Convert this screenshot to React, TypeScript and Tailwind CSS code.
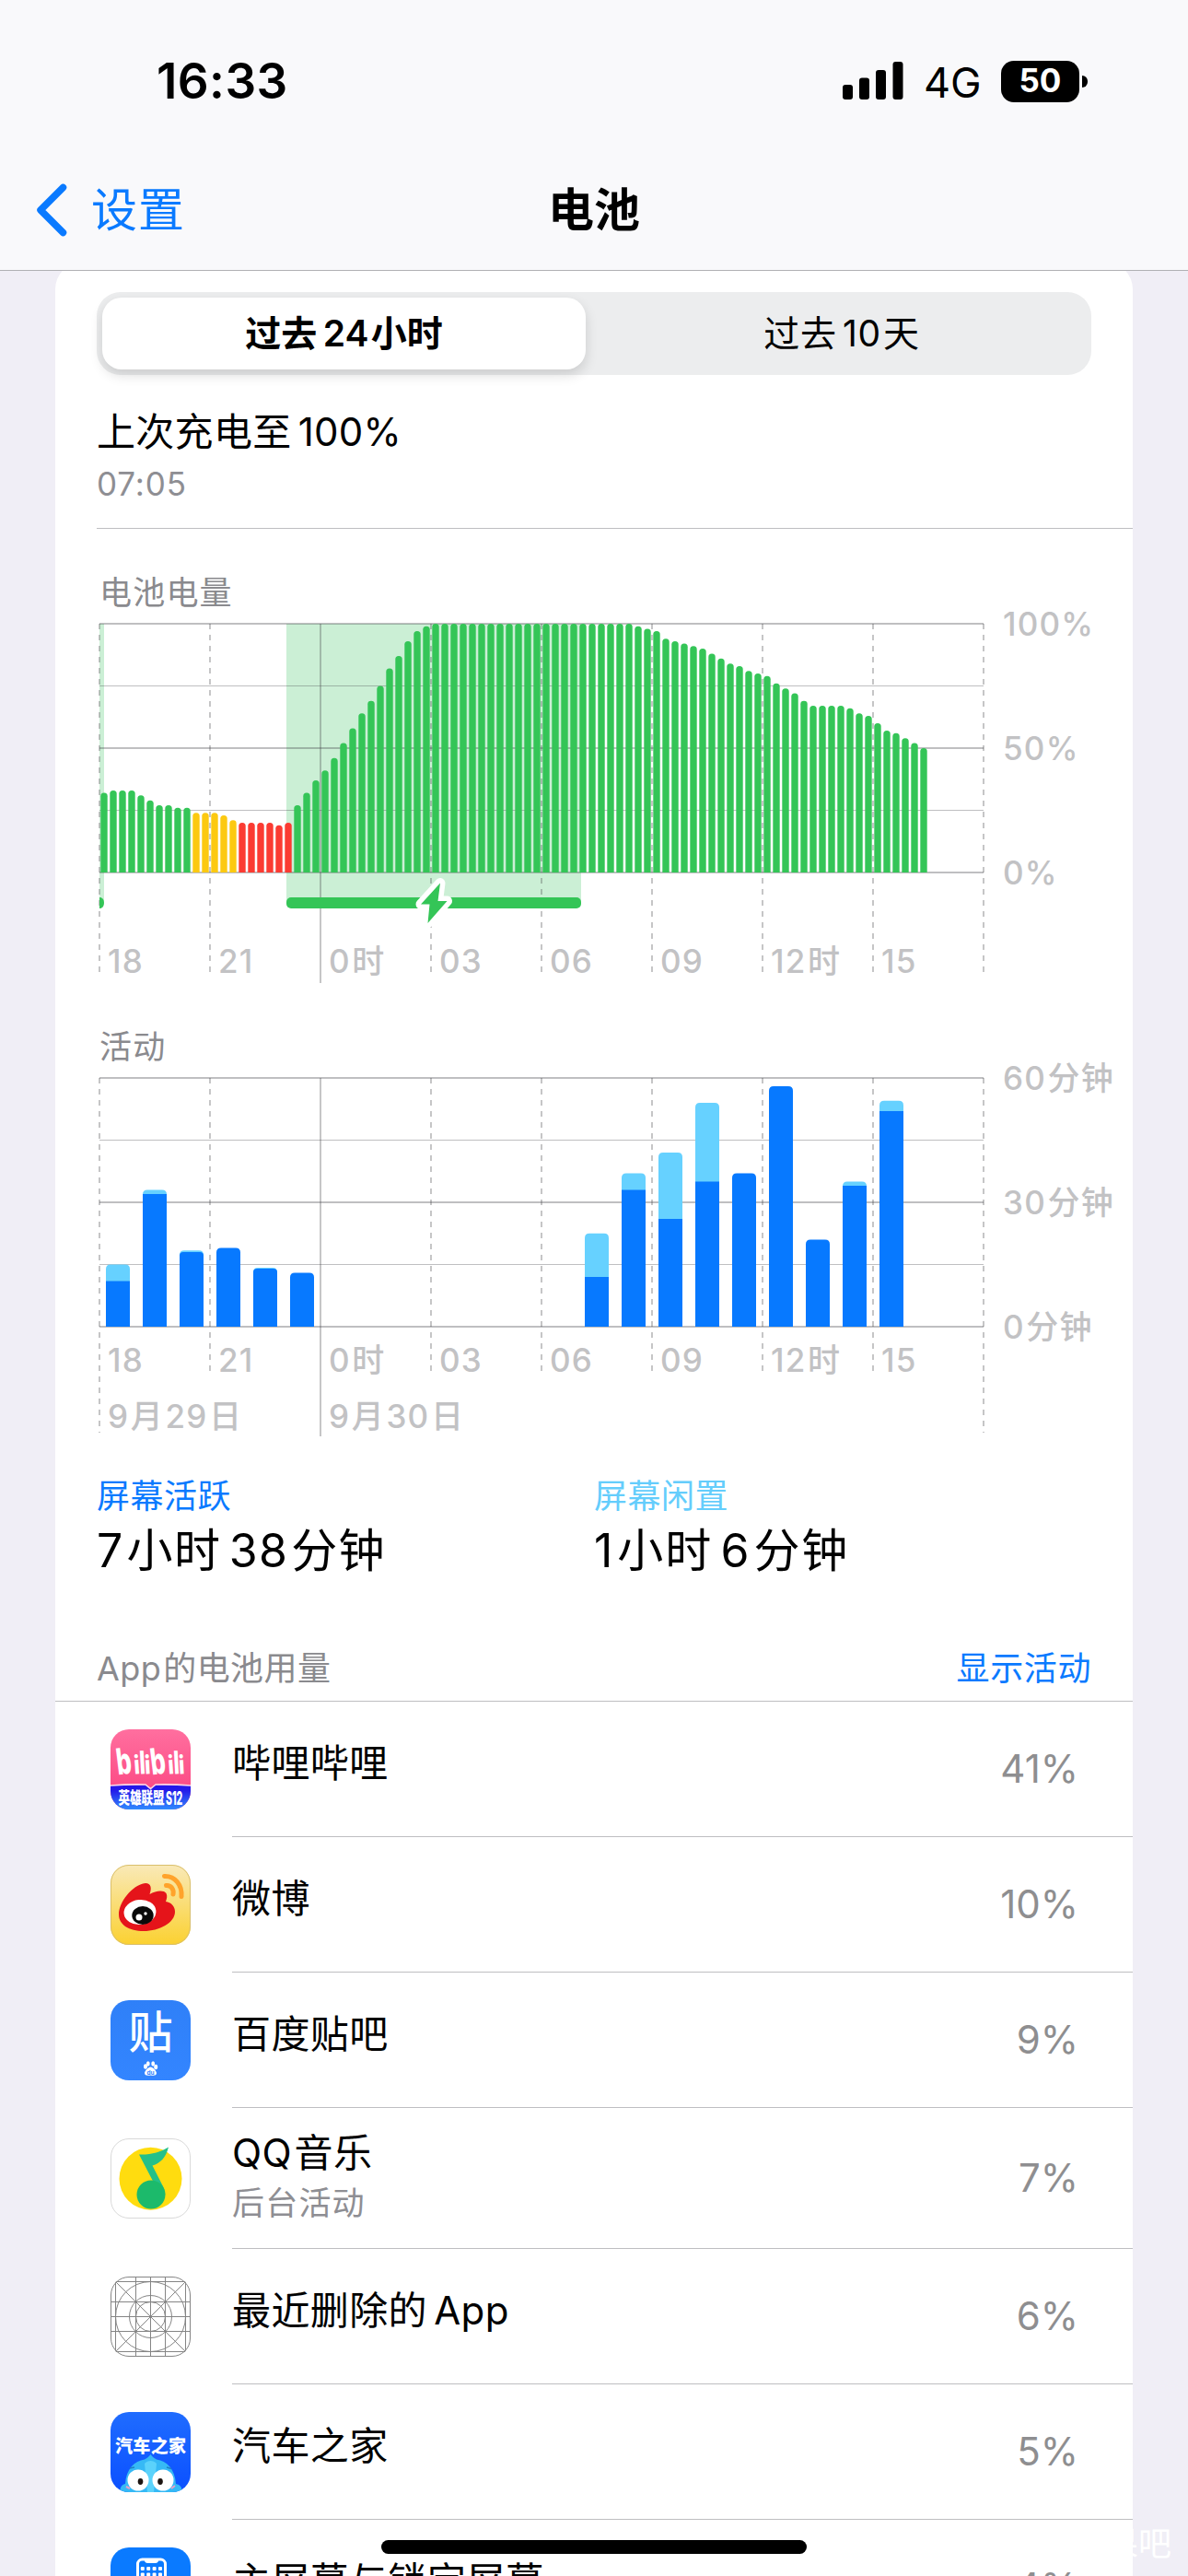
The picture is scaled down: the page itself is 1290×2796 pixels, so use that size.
import React from 'react';

const LEVELS = [
  32, 33, 33, 33, 31, 29, 27, 27, 26, 26, 24, 24, 24, 23, 21, 20, 20, 20, 20, 19, 20, 27, 32, 37, 41, 46, 52, 58, 64,
  69, 75, 82, 87, 93, 97, 99, 100, 100, 100, 100, 100, 100, 100, 100, 100, 100, 100, 100, 100, 100, 100, 100, 100, 100,
  100, 100, 100, 100, 99, 98, 97, 94, 93, 92, 91, 90, 88, 86, 84, 83, 81, 80, 79, 76, 74, 72, 69, 67, 67, 67, 67, 66,
  64, 63, 60, 57, 56, 54, 52, 50,
];

// [hour slot, screen on minutes, total minutes]
const ACTIVITY: [number, number, number][] = [
  [0, 11, 15],
  [1, 32, 33],
  [2, 18, 18.4],
  [3, 19, 19],
  [4, 14, 14.2],
  [5, 13, 13],
  [13, 12, 22.5],
  [14, 33, 37],
  [15, 26, 42],
  [16, 35, 54],
  [17, 37, 37],
  [18, 58, 58],
  [19, 21, 21],
  [20, 34, 35],
  [21, 52, 54.5],
];

const HOURS = ['18', '21', '0时', '03', '06', '09', '12时', '15'];

const LEFT = 48;
const STEP = 120;
const PLOT_W = 960;
const PLOT_H = 270;

const splitLatin = (text: string) => text.split(/([\x21-\x7e]+)/).filter(Boolean);
const isLatin = (part: string) => /^[\x21-\x7e]/.test(part);

// adds the small gap between latin and chinese runs
const Mixed: React.FC<{ text: string }> = ({ text }) => (
  <>
    {splitLatin(text).map((part, i) => (
      <span key={i} className={i === 0 ? '' : isLatin(part) ? 'ml-[0.17em]' : 'ml-[0.06em]'}>
        {part}
      </span>
    ))}
  </>
);

interface LabelProps {
  x: number;
  y: number;
  text: string;
  className?: string;
}

const Label: React.FC<LabelProps> = ({ x, y, text, className = 'fill-[#c2c2c4] text-[35px] font-medium' }) => (
  <text x={x} y={y + 12.8} className={className} letterSpacing="1.2">
    {splitLatin(text).map((part, i) => (
      <tspan key={i} dx={i > 0 ? 1.5 : 0}>
        {part}
      </tspan>
    ))}
  </text>
);

interface GridProps {
  top: number;
  ends: number[];
  dash: string;
}

const Grid: React.FC<GridProps> = ({ top, ends, dash }) => (
  <g stroke="#3c3c43" strokeOpacity="0.33">
    {[0, 1, 2, 3, 4].map((i) => (
      <line
        key={i}
        x1={LEFT}
        x2={LEFT + PLOT_W}
        y1={top + i * 67.5}
        y2={top + i * 67.5}
        strokeWidth={i % 2 ? 1.2 : 1.8}
      />
    ))}
    {ends.map((end, i) => (
      <line
        key={i}
        x1={LEFT + i * STEP}
        x2={LEFT + i * STEP}
        y1={top}
        y2={end}
        strokeWidth="1.8"
        strokeDasharray={i === 2 ? undefined : dash}
      />
    ))}
  </g>
);

const barTop = (x: number, y: number, w: number, bottom: number, r: number) =>
  `M${x} ${bottom}V${y + r}Q${x} ${y} ${x + r} ${y}H${x + w - r}Q${x + w} ${y} ${x + w} ${y + r}V${bottom}Z`;

const levelColor = (i: number) => {
  if (i >= 10 && i < 15) return '#fcc911';
  if (i >= 15 && i < 21) return '#fb3b32';
  return '#34c557';
};

const LevelChart: React.FC = () => {
  const top = 103;
  const bottom = top + PLOT_H;
  return (
    <svg width="1170" height="516" viewBox="0 0 1170 516" className="block">
      <Label x={48} y={69} text="电池电量" className="fill-[#8a8a8e] text-[35px]" />
      <rect x="48" y={top} width="5" height="303" fill="#cbefd5" />
      <rect x="251" y={top} width="320" height="303" fill="#cbefd5" />
      <Grid top={top} ends={[487, 487, 493, 487, 487, 487, 487, 487, 487]} dash="6 6" />
      {LEVELS.map((v, i) => (
        <path
          key={i}
          d={barTop(LEFT + i * 10 + 1.3, bottom - v * 2.7, 7.4, bottom, 3.6)}
          fill={levelColor(i)}
        />
      ))}
      <path d="M48 400H49Q53 401 53 406Q53 411 49 412H48Z" fill="#34c557" />
      <rect x="251" y="400" width="320" height="12" rx="5" fill="#34c557" />
      <path
        d="M418 384.5L397 407.5H406.500L404.500 428L425.500 404H415.500Z"
        fill="#34c557"
        stroke="#fff"
        strokeWidth="11"
        strokeLinejoin="round"
        paintOrder="stroke"
      />
      {HOURS.map((h, i) => (
        <Label key={h} x={LEFT + i * STEP + 9} y={469.5} text={h} />
      ))}
      {['100%', '50%', '0%'].map((t, i) => (
        <Label key={t} x={1029} y={top + i * 135 + 0.5} text={t} />
      ))}
    </svg>
  );
};

const ActivityChart: React.FC = () => {
  const top = 80;
  const bottom = top + PLOT_H;
  return (
    <svg width="1170" height="500" viewBox="0 0 1170 500" className="block">
      <Label x={48} y={46.5} text="活动" className="fill-[#8a8a8e] text-[35px]" />
      <Grid top={top} ends={[465, 404, 469, 404, 404, 404, 404, 404, 465]} dash="6 6" />
      {ACTIVITY.map(([slot, on, total]) => {
        const x = LEFT + slot * 40 + 7;
        const onTop = bottom - on * 4.5;
        return (
          <g key={slot}>
            <path d={barTop(x, bottom - total * 4.5, 26, bottom, 5)} fill={total > on ? '#66d1ff' : '#0779ff'} />
            {total > on && (
              <path d={barTop(x, onTop, 26, bottom, total - on < 0.5 ? 4 : 0)} fill="#0779ff" />
            )}
          </g>
        );
      })}
      {HOURS.map((h, i) => (
        <Label key={h} x={LEFT + i * STEP + 9} y={386} text={h} />
      ))}
      <Label x={57} y={447} text="9月29日" />
      <Label x={297} y={447} text="9月30日" />
      {['60分钟', '30分钟', '0分钟'].map((t, i) => (
        <Label key={t} x={1029} y={top + i * 135 + 0.5} text={t} />
      ))}
    </svg>
  );
};

const IconFrame: React.FC<{ id: string; from: string; to: string; border?: string; children: React.ReactNode }> = ({
  id,
  from,
  to,
  border,
  children,
}) => (
  <svg width="87" height="87" viewBox="0 0 87 87" className="block">
    <defs>
      <clipPath id={`${id}-clip`}>
        <rect width="87" height="87" rx="20" />
      </clipPath>
      <linearGradient id={`${id}-bg`} x1="0" y1="0" x2="0" y2="1">
        <stop offset="0" stopColor={from} />
        <stop offset="1" stopColor={to} />
      </linearGradient>
    </defs>
    <g clipPath={`url(#${id}-clip)`}>
      <rect width="87" height="87" fill={`url(#${id}-bg)`} />
      {children}
    </g>
    {border && <rect x="0.5" y="0.5" width="86" height="86" rx="19.5" fill="none" stroke={border} />}
  </svg>
);

const BilibiliIcon = () => (
  <IconFrame id="bili" from="#ff6f9f" to="#fb3f7c">
    <g className="fill-white text-[30px] font-extrabold">
      {[8, 45].map((x) => (
        <g key={x} transform={`translate(${x} 49.500)`}>
          <text transform="rotate(-7) scale(0.85 1.320)">b</text>
          <text transform="translate(18 -1) rotate(-4) scale(0.75 0.920)">i</text>
          <text transform="translate(24 -1) rotate(-3) scale(0.75 1.150)">l</text>
          <text transform="translate(29.500 -1) rotate(-3) scale(0.75 0.920)">i</text>
        </g>
      ))}
    </g>
    <defs>
      <linearGradient id="bili-foot" x1="0" y1="0" x2="0" y2="1">
        <stop offset="0.2" stopColor="#2418e8" />
        <stop offset="1" stopColor="#2f8bff" />
      </linearGradient>
    </defs>
    <path d="M0 61Q20 60 38 60.5L43.5 65L49 60.5Q67 60 87 61V87H0Z" fill="url(#bili-foot)" />
    <path d="M0 61Q20 59.5 38 60L43.5 64.5L49 60Q67 59.5 87 61" fill="none" stroke="#ffd9e8" strokeWidth="1.6" />
    <text transform="translate(8.500 81) scale(0.76 1.080)" className="fill-white text-[16.5px] font-black">
      英雄联盟
    </text>
    <text transform="translate(60 82) scale(0.620 1.200)" className="fill-white text-[17px] font-extrabold">
      S12
    </text>
  </IconFrame>
);

const WeiboIcon = () => (
  <IconFrame id="weibo" from="#f9e9b8" to="#fbd130" border="#d9bf6c">
    <path
      d="M9 54C9 41 23 22 38 20C44 20 45 25 42.500 32C49 28 58 27 60.500 31C62 34 61 37 60 40C66 41 70 45 70 51C70 63 53 72 36 72C20 72 9 65 9 54Z"
      fill="#e5141a"
    />
    <ellipse cx="32" cy="51.500" rx="17.500" ry="13.500" fill="#fff" transform="rotate(-6 32 51.5)" />
    <ellipse cx="35" cy="55" rx="11.700" ry="10" fill="#0a0a0a" />
    <circle cx="31" cy="57" r="3.500" fill="#fff" />
    <circle cx="38" cy="53" r="1.700" fill="#fff" />
    <path
      d="M58.500 12.500C70 12 78 22 77 34.500M60.500 22.500C66 22 69 27 68 32"
      fill="none"
      stroke="#ffa32b"
      strokeWidth="5"
      strokeLinecap="round"
    />
  </IconFrame>
);

const TiebaIcon = () => (
  <IconFrame id="tieba" from="#2f80f8" to="#3385ff">
    <text x="19.500" y="51.500" className="fill-white text-[48px] font-medium">
      贴
    </text>
    <g fill="#fff">
      <ellipse cx="38" cy="72" rx="2" ry="2.800" />
      <ellipse cx="40.800" cy="69" rx="1.900" ry="2.700" />
      <ellipse cx="46.200" cy="69" rx="1.900" ry="2.700" />
      <ellipse cx="49.200" cy="72.500" rx="2" ry="2.800" />
      <path d="M43.500 72.500C46 72.500 50 77 50 79C50 82 47 82 43.500 81.500C40 82 37 82 37 79C37 77 41 72.500 43.500 72.500Z" />
    </g>
    <text x="39.500" y="80.500" className="fill-[#3385ff] text-[6.5px] font-bold">
      du
    </text>
  </IconFrame>
);

const MusicIcon = () => (
  <IconFrame id="music" from="#ffffff" to="#ffffff" border="#d9d9d9">
    <circle cx="43.500" cy="43.700" r="34" fill="#ffdc0f" />
    <path
      d="M31 17.500C44 18 54 15 63 9.500C60 21 54 27 45.500 29.500L57.500 53C59 57 59.500 60 59 63L50 54L31 17.500Z"
      fill="#25c089"
    />
    <circle cx="44" cy="61" r="15.500" fill="#1cba6b" />
  </IconFrame>
);

const GridIcon = () => (
  <IconFrame id="grid" from="#ffffff" to="#ffffff" border="#858585">
    <g fill="none" stroke="#858585">
      {[5.5, 27.5, 43.5, 59.5, 81.5].map((p) => (
        <path key={p} d={`M${p} 0V87M0 ${p}H87`} />
      ))}
      <path d="M5.500 5.500L81.500 81.500M81.500 5.500L5.500 81.500" />
      <circle cx="43.500" cy="43.500" r="38" />
      <circle cx="43.500" cy="43.500" r="23" />
      <circle cx="43.500" cy="43.500" r="16" />
    </g>
  </IconFrame>
);

const AutohomeIcon = () => (
  <IconFrame id="auto" from="#1f6cff" to="#0b50ff">
    <text x="5" y="43.500" className="fill-white text-[19px] font-black" textLength="77">
      汽车之家
    </text>
    <path
      d="M10 87C11 79 13 79 16 78C17 62 26 53 37 51.500C40 50 42 48 43.500 46C45 48 47 50 50 51.500C61 53 70 62 71 78C75 79 77 80 78 87Z"
      fill="#36b9f5"
    />
    <path d="M37 56C40 52 47 52 50 56L47 87H40Z" fill="#5bd2fb" />
    <circle cx="30" cy="74" r="11.500" fill="#fff" />
    <circle cx="57" cy="74" r="11.500" fill="#fff" />
    <ellipse cx="32.500" cy="75.500" rx="2.800" ry="3.400" fill="#1c1512" />
    <ellipse cx="54" cy="75.500" rx="2.800" ry="3.400" fill="#1c1512" />
    <path d="M21 61L26 60M61 60L66 61.500" stroke="#1d7fc4" strokeWidth="1.500" />
    <path d="M17 81L21 83M66 83L70 80" stroke="#e9a0c8" strokeWidth="2" />
  </IconFrame>
);

const HomeScreenIcon = () => (
  <IconFrame id="home" from="#0a7aff" to="#0a7aff">
    <rect x="29.500" y="13" width="30" height="60" rx="5" fill="none" stroke="#fff" strokeWidth="3" />
    <path d="M37 13H52V15Q51 17 49 17H40Q38 17 37 15Z" fill="#fff" />
    {[23, 29.5, 36].map((y) =>
      [34.8, 41.2, 47.6, 54].map((x) => (
        <rect key={`${x}-${y}`} x={x - 2} y={y - 2} width="4" height="4" rx="1" fill="#fff" />
      )),
    )}
  </IconFrame>
);

interface AppUsage {
  name: string;
  note?: string;
  percent: string;
  icon: React.ReactNode;
}

const APPS: AppUsage[] = [
  { name: '哔哩哔哩', percent: '41%', icon: <BilibiliIcon /> },
  { name: '微博', percent: '10%', icon: <WeiboIcon /> },
  { name: '百度贴吧', percent: '9%', icon: <TiebaIcon /> },
  { name: 'QQ音乐', note: '后台活动', percent: '7%', icon: <MusicIcon /> },
  { name: '最近删除的App', percent: '6%', icon: <GridIcon /> },
  { name: '汽车之家', percent: '5%', icon: <AutohomeIcon /> },
  { name: '主屏幕与锁定屏幕', percent: '4%', icon: <HomeScreenIcon /> },
];

const AppRow: React.FC<{ app: AppUsage }> = ({ app }) => (
  <div className={`flex items-center pl-[60px] ${app.note ? 'h-[153px]' : 'h-[147px]'}`}>
    {app.icon}
    <div className="ml-[45px] flex h-full flex-1 items-center justify-between border-b border-[#bebec1] pr-[59px]">
      <div className={app.note ? '' : 'pb-[13px]'}>
        <div className="text-[42px] leading-[54px] tracking-[0.4px] text-black">
          <Mixed text={app.name} />
        </div>
        {app.note && <div className="text-[35px] leading-[54px] tracking-[1.2px] text-[#8e8e93]">{app.note}</div>}
      </div>
      <div className="text-[42px] leading-[54px] text-[#8e8e90]">{app.percent}</div>
    </div>
  </div>
);

const StatusBar: React.FC = () => (
  <div className="flex h-[176px] items-center justify-between pl-[170px] pr-[109px]">
    <div className="text-[53px] font-semibold leading-[60px] tracking-[0.4px] text-black">16:33</div>
    <div className="flex items-center">
      <svg width="66" height="42" viewBox="0 0 66 42" className="mr-[22px] block">
        <rect x="0" y="25" width="11" height="16" rx="3" />
        <rect x="18" y="17.500" width="11" height="23.500" rx="3" />
        <rect x="36" y="9" width="11" height="32" rx="3" />
        <rect x="54.500" y="0" width="11" height="41" rx="3" />
      </svg>
      <div className="w-[84px] pt-[3px] text-[45px] leading-[46px] text-black">4G</div>
      <div className="flex h-[45px] w-[85px] items-center justify-center rounded-[14px] bg-black pb-[2px] text-[35px] font-bold leading-[43px] text-white">
        50
      </div>
      <div className="ml-[3px] h-[13px] w-[6px] rounded-r-full bg-black" />
    </div>
  </div>
);

export default function App() {
  return (
    <div className="relative h-[2796px] w-[1290px] overflow-hidden bg-[#f0eef6] font-[Inter,'Noto_Sans_CJK_SC',sans-serif]">
      <header className="relative z-10 h-[294px] border-b border-[#b0b0b4] bg-[#f9f9fb]">
        <StatusBar />
        <div className="grid h-[103px] grid-cols-3 items-center text-[50px] leading-[60px]">
          <div className="flex items-center pl-[38px] text-[#0a7aff]">
            <svg width="35" height="58" viewBox="0 0 35 58" className="block">
              <path
                d="M30.500 4.500L6 29L30.500 53.500"
                fill="none"
                stroke="currentColor"
                strokeWidth="7.500"
                strokeLinecap="round"
                strokeLinejoin="round"
              />
            </svg>
            <span className="ml-[26px] tracking-[1px]">设置</span>
          </div>
          <h1 className="text-center font-bold text-black">电池</h1>
        </div>
      </header>

      <main className="mx-[60px] -mt-[10px] h-[2600px] rounded-t-[30px] bg-white pt-[33px]">
        <div className="mx-[45px] flex h-[90px] rounded-[26px] bg-[#ecedee] p-[6px] text-[39px] text-black">
          <div className="flex w-[525px] items-center justify-center rounded-[21px] bg-white font-semibold shadow-[0_6px_14px_rgba(0,0,0,0.14)]">
            <div>
              <Mixed text="过去24小时" />
            </div>
          </div>
          <div className="flex flex-1 items-center justify-center pl-[13px]">
            <div className="tracking-[0.6px]">
              <Mixed text="过去10天" />
            </div>
          </div>
        </div>

        <div className="ml-[45px] border-b border-[#bebec1] pb-[26px] pt-[35px]">
          <div className="text-[42px] leading-[54px] tracking-[0.3px] text-black">
            <Mixed text="上次充电至100%" />
          </div>
          <div className="mt-[8px] pb-px text-[35px] leading-[42px] tracking-[0.9px] text-[#8e8e93]">07:05</div>
        </div>

        <LevelChart />
        <ActivityChart />

        <div className="grid grid-cols-2 px-[45px] pt-[12px]">
          <div>
            <div className="text-[36px] leading-[44px] tracking-[0.5px] text-[#0a7aff]">屏幕活跃</div>
            <div className="mt-[6px] text-[50px] leading-[62px] tracking-[1.3px] text-black">
              <Mixed text="7小时38分钟" />
            </div>
          </div>
          <div>
            <div className="text-[36px] leading-[44px] tracking-[0.5px] text-[#64cdfc]">屏幕闲置</div>
            <div className="mt-[6px] text-[50px] leading-[62px] tracking-[1.9px] text-black">
              <Mixed text="1小时6分钟" />
            </div>
          </div>
        </div>

        <div className="flex justify-between border-b border-[#bebec1] px-[45px] pb-[13px] pt-[75px] text-[36px] leading-[44px]">
          <div className="tracking-[0.4px] text-[#8a8a8e]">
            <Mixed text="App的电池用量" />
          </div>
          <div className="tracking-[0.6px] text-[#0a7aff]">显示活动</div>
        </div>

        {APPS.map((app) => (
          <AppRow key={app.name} app={app} />
        ))}
      </main>

      <div className="absolute bottom-[24px] left-[414px] h-[15px] w-[462px] rounded-full bg-black" />
      <div className="absolute bottom-[15px] right-[18px] text-[36px] leading-[40px] text-white">果吧</div>
    </div>
  );
}
